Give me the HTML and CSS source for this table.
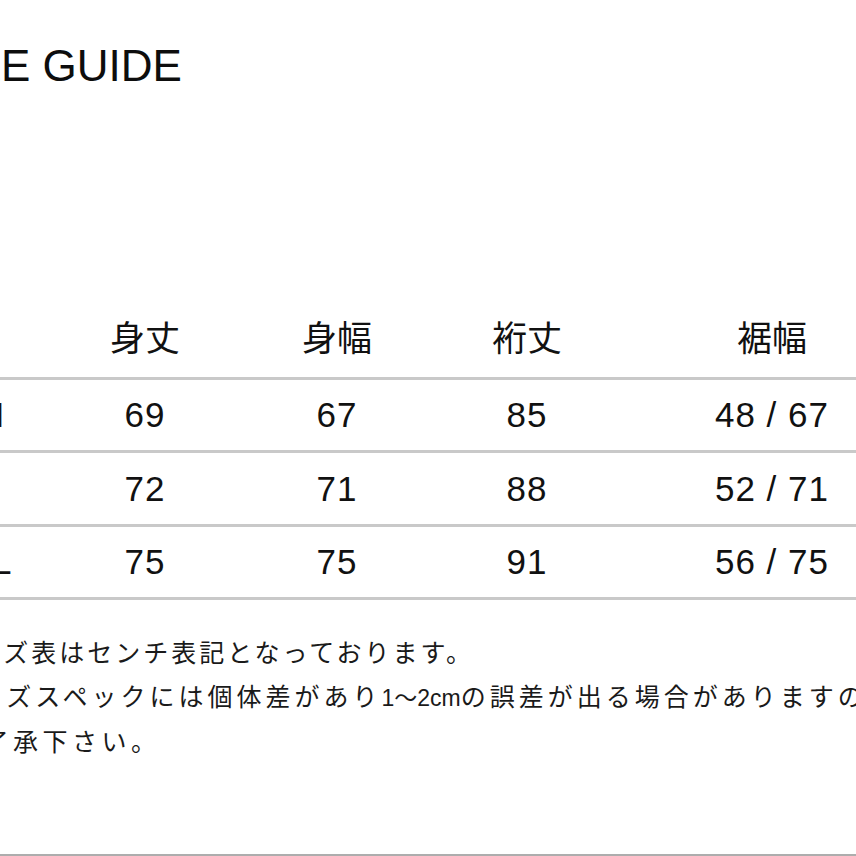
FILE: index.html
```html
<!DOCTYPE html>
<html lang="ja">
<head>
<meta charset="utf-8">
<title>SIZE GUIDE</title>
<link rel="stylesheet" href="styles.css">
</head>
<body>
<div class="page">
  <div class="content">
    <h1 class="title">SIZE GUIDE</h1>
    <div class="table">
      <div class="row head">
        <div class="cell"></div>
        <div class="cell">身丈</div>
        <div class="cell">身幅</div>
        <div class="cell">裄丈</div>
        <div class="cell">裾幅</div>
      </div>
      <div class="row">
        <div class="cell">M</div>
        <div class="cell">69</div>
        <div class="cell">67</div>
        <div class="cell">85</div>
        <div class="cell">48 / 67</div>
      </div>
      <div class="row">
        <div class="cell">L</div>
        <div class="cell">72</div>
        <div class="cell">71</div>
        <div class="cell">88</div>
        <div class="cell">52 / 71</div>
      </div>
      <div class="row">
        <div class="cell">XL</div>
        <div class="cell">75</div>
        <div class="cell">75</div>
        <div class="cell">91</div>
        <div class="cell">56 / 75</div>
      </div>
    </div>
    <div class="notes">
      <p class="note first">※サイズ表はセンチ表記となっております。</p>
      <p class="note second">※サイズスペックには個体差があり<span class="latin">1〜2cm</span>の誤差が出る場合がありますので</p>
      <p class="note indent">ご了承下さい。</p>
    </div>
  </div>
</div>
</body>
</html>
```
FILE: styles.css
```css
html, body {
  margin: 0;
  padding: 0;
  background: #ffffff;
}

.page {
  width: 856px;
  height: 856px;
  box-sizing: border-box;
  overflow: hidden;
  border-bottom: 2px solid #adadad;
  color: #111111;
}

.content {
  margin-left: -88px;
  width: 1030px;
  padding-top: 44px;
}

.title {
  margin: 0;
  padding-left: 20.5px;
  font-family: "Liberation Sans", Arial, sans-serif;
  font-weight: normal;
  font-size: 44px;
  line-height: 44px;
  color: #0d0d0d;
}

.table {
  margin-top: 218.6px;
}

.row {
  display: grid;
  grid-template-columns: 156px 154px 230px 150px 340px;
  height: 70.4px;
  border-bottom: 3px solid #c9c9c9;
  align-items: center;
  font-family: "Liberation Sans", Arial, sans-serif;
  font-size: 35px;
  letter-spacing: 1px;
}

.row.head {
  font-family: "Noto Sans CJK JP", sans-serif;
  font-size: 35px;
  letter-spacing: 0;
  padding-bottom: 12px;
  height: 58.4px;
}

.cell {
  text-align: center;
  white-space: nowrap;
}

.notes {
  margin-top: 31px;
  padding-left: 8px;
}

.note {
  margin: 0;
  font-family: "Liberation Sans", "Noto Sans CJK JP", sans-serif;
  font-size: 25px;
  line-height: 44px;
  letter-spacing: 4px;
  white-space: nowrap;
  color: #1a1a1a;
}

.note.first {
  letter-spacing: 3px;
}

.note.second {
  letter-spacing: 4px;
}

.latin {
  font-size: 23px;
  letter-spacing: 0;
}

.note.indent {
  padding-left: 34px;
  letter-spacing: 4.5px;
}
```
